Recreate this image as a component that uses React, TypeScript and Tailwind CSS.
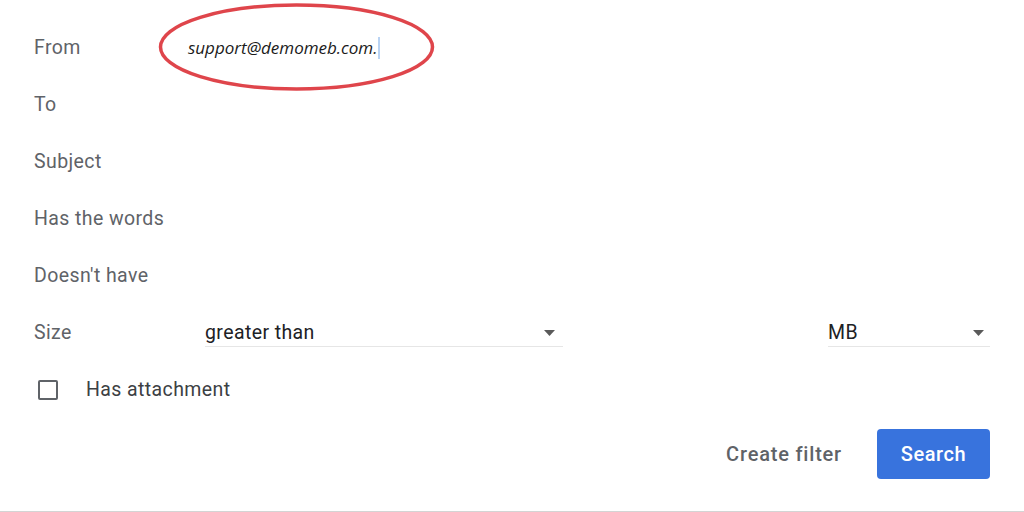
import React from "react";

const labelCls = "text-[19.5px] tracking-[0.4px] text-[#5f6368] leading-none";

function Row({ label, children }: { label: string; children?: React.ReactNode }) {
  return (
    <div className="flex items-center h-[57px]">
      <div className={`w-[154px] shrink-0 ${labelCls}`}>{label}</div>
      {children}
    </div>
  );
}

function Caret() {
  return (
    <svg width="11" height="6" viewBox="0 0 11 6" className="shrink-0">
      <path d="M0 0 L11 0 L5.5 6 Z" fill="#5a5a5a" />
    </svg>
  );
}

export default function App() {
  return (
    <div
      className="relative w-[1024px] h-[512px] bg-white border-b border-[#d4d4d4] overflow-hidden"
      style={{ fontFamily: "Roboto, 'Liberation Sans', sans-serif" }}
    >
      <div className="flex flex-col pl-[34px] pt-[19px]">
        <Row label="From">
          <div className="flex items-center">
            <span
              className="italic text-[17px] text-[#1a1a1a] leading-none"
              style={{ fontFamily: "'Open Sans', 'Noto Sans', sans-serif" }}
            >
              support@demomeb.com.
            </span>
            <span className="ml-[1px] w-[2px] h-[22px] bg-[#b9d3f3]" />
          </div>
        </Row>
        <Row label="To" />
        <Row label="Subject" />
        <Row label="Has the words" />
        <Row label="Doesn't have" />
        <div className="flex items-center h-[57px]">
          <div className={`w-[171px] shrink-0 ${labelCls}`}>Size</div>
          <div className="relative flex items-center justify-between w-[358px] h-[57px]">
            <span className="text-[19.5px] tracking-[0.4px] text-[#202124] leading-none">greater than</span>
            <span className="mr-[8px]">
              <Caret />
            </span>
            <div className="absolute left-0 right-0 top-[42px] h-[1px] bg-[#e6e6e6]" />
          </div>
          <div className="w-[265px] shrink-0" />
          <div className="relative flex items-center justify-between w-[162px] h-[57px]">
            <span className="text-[19.5px] tracking-[0.4px] text-[#202124] leading-none">MB</span>
            <span className="mr-[6px]">
              <Caret />
            </span>
            <div className="absolute left-0 right-0 top-[42px] h-[1px] bg-[#e6e6e6]" />
          </div>
        </div>
        <div className="flex items-center h-[57px]">
          <div className="ml-[4px] w-[20px] h-[20px] border-2 border-[#5f6368] rounded-[2px]" />
          <span className="ml-[28px] text-[19.5px] tracking-[0.4px] text-[#3c4043] leading-none">Has attachment</span>
        </div>
        <div className="flex items-center justify-end h-[50px] mt-[11px] pr-[34px]">
          <span className="text-[20px] tracking-[0.8px] font-medium text-[#5f6368] leading-none mr-[35px]">Create filter</span>
          <button className="w-[113px] h-[50px] rounded-[4px] bg-[#3873dd] text-white text-[20px] tracking-[0.6px] font-medium leading-none">
            Search
          </button>
        </div>
      </div>
      <svg
        className="absolute left-0 top-0 pointer-events-none"
        width="1024"
        height="512"
      >
        <ellipse cx="296.5" cy="47" rx="136" ry="42" fill="none" stroke="#df454b" strokeWidth="3.5" />
      </svg>
    </div>
  );
}
